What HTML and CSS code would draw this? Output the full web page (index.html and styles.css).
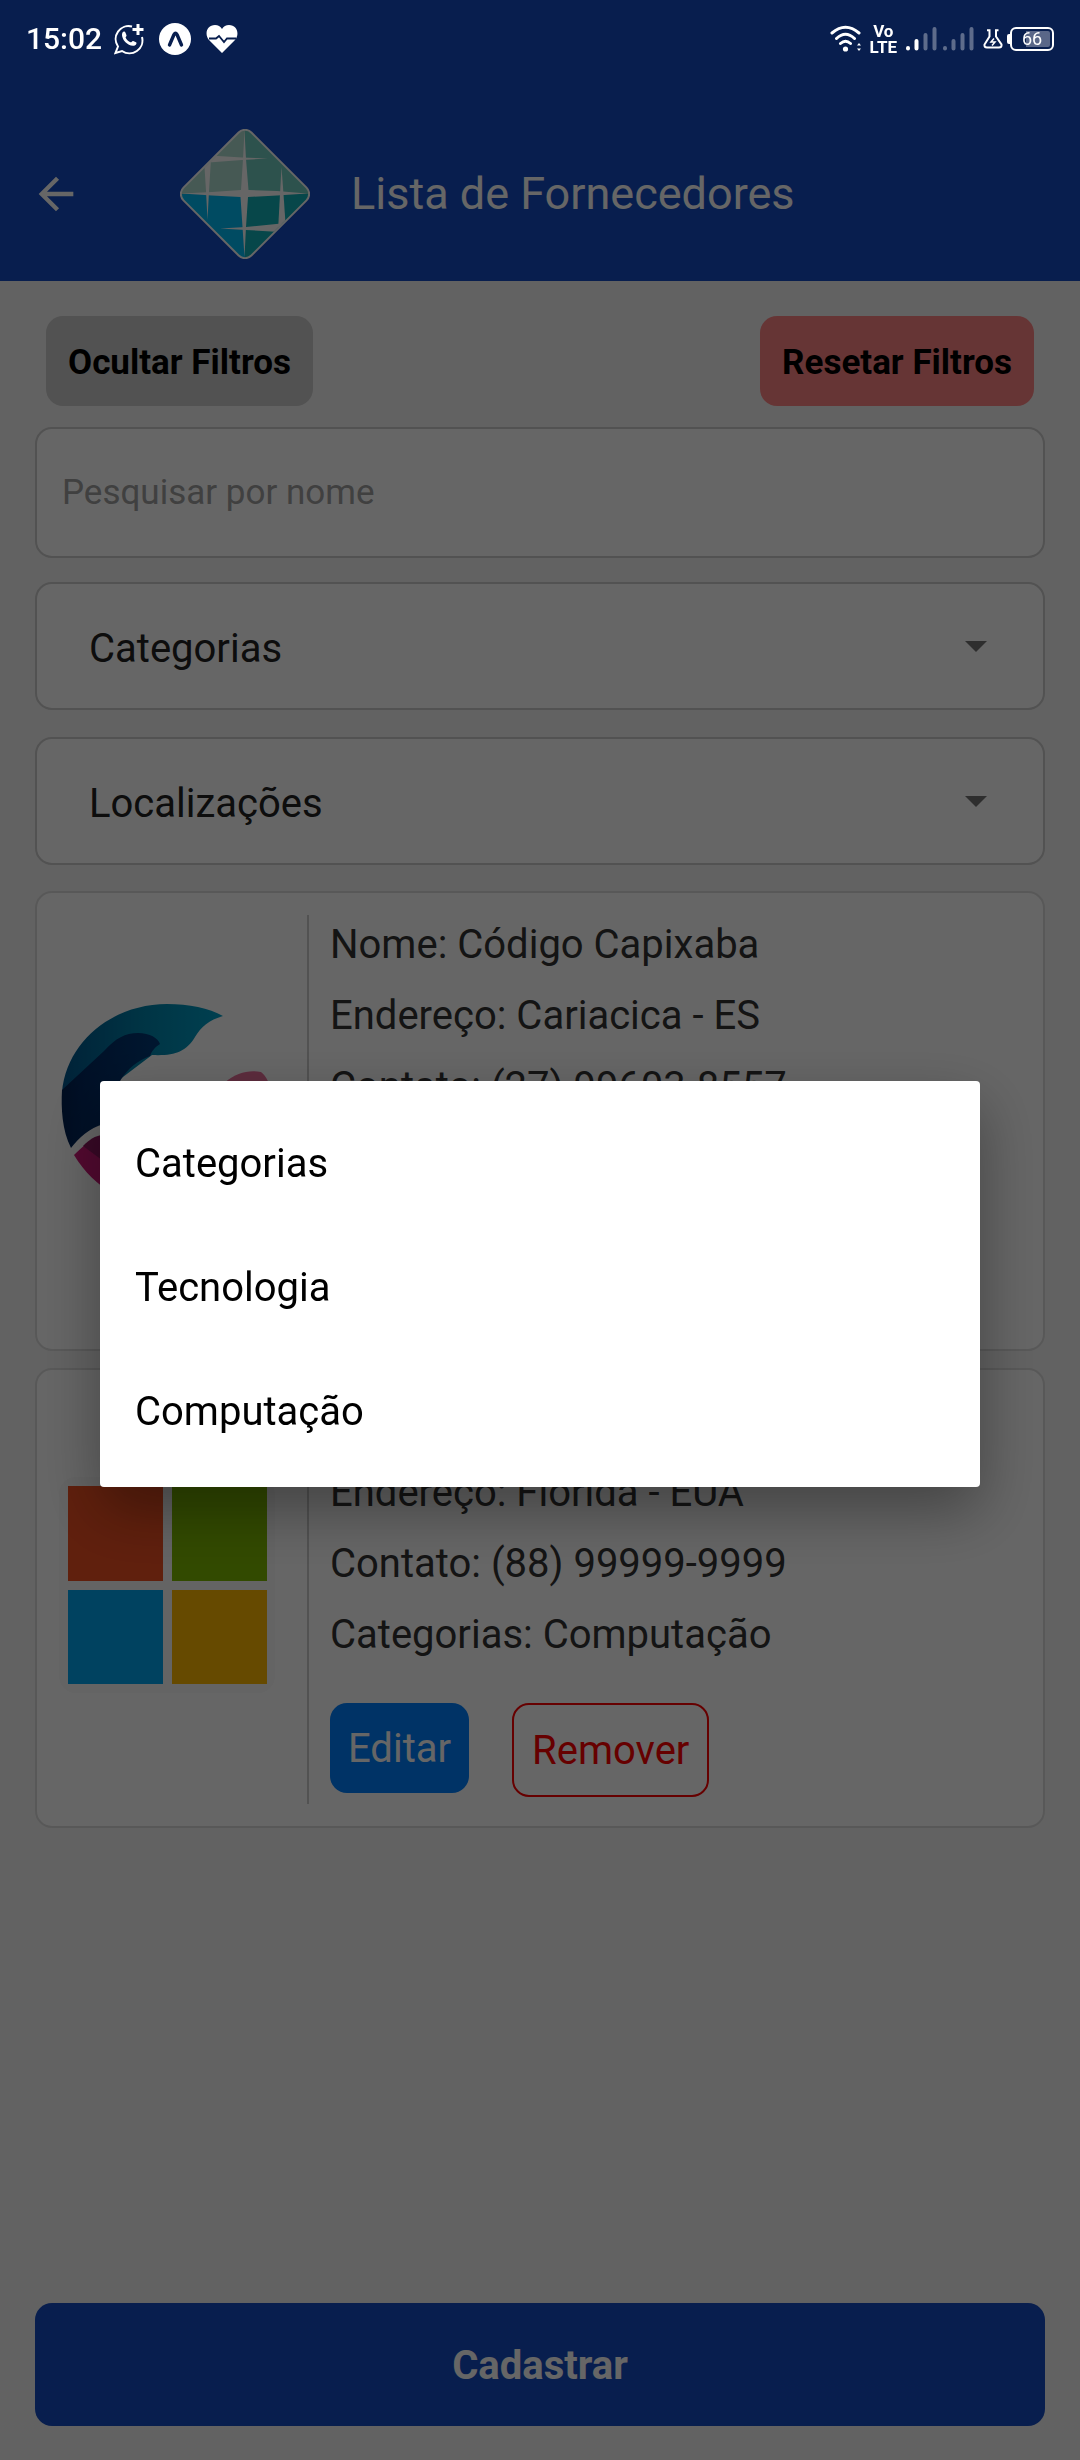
FILE: index.html
```html
<!DOCTYPE html>
<html lang="pt-BR">
<head>
<meta charset="utf-8">
<meta name="viewport" content="width=device-width, initial-scale=1">
<title>Lista de Fornecedores</title>
<link rel="stylesheet" href="styles.css">
</head>
<body>
<div class="app">
  <header class="top">
    <div class="status">
      <div class="status-group status-left">
        <span class="clock">15:02</span>
        <div class="status-group">
          <svg width="30" height="32" viewBox="0 0 30 32" fill="none" stroke="#fff" stroke-width="2">
            <path d="M18 3.500A13 13 0 0 0 4 23.500L1.500 30L8 28A13 13 0 0 0 28 14"/>
            <path d="M24 1v11M18.500 6.500h11" stroke-width="3"/>
            <path d="M8.500 9.500c1-1.500 2.500-1.300 3 .2l1 2.500c.3 1-1.300 1.800-.8 2.600c1 2 2.700 3.600 4.800 4.500c1 .4 1.600-1.700 2.700-1.300l2.800 1.300c1 .5.500 2.500-1.200 3.200c-3 1.200-7-1-9.300-3.300S7 12.500 8.500 9.500z" fill="#fff" stroke="none"/>
          </svg>
          <svg width="32" height="32" viewBox="0 0 32 32">
            <circle cx="16" cy="16" r="16" fill="#fff"/>
            <path d="M10.500 22L15 11.500Q16.500 9 18 11.500L22.500 22" fill="none" stroke="#081e4e" stroke-width="3.400" stroke-linecap="round" stroke-linejoin="round"/>
          </svg>
          <svg width="32" height="32" viewBox="0 0 32 32">
            <path d="M16 30L3 17C-2 11 1 2 9 2c3 0 5.500 1.500 7 4c1.500-2.500 4-4 7-4c8 0 11 9 6 15z" fill="#fff"/>
            <path d="M3 15.500h7l3-2.500l5 6l3-3.500h9" fill="none" stroke="#081e4e" stroke-width="1.800"/>
          </svg>
        </div>
      </div>
      <div class="status-group status-right">
        <svg width="32" height="28" viewBox="0 0 32 28" fill="none" stroke="#fff" stroke-width="3" stroke-linecap="round">
          <path d="M2 8Q15.500-3.500 29 8M6.500 13.500Q15.500 5 24.500 13.500M10.500 18.500Q15.500 14 20.500 18.500"/>
          <circle cx="15.500" cy="24" r="2.600" fill="#fff" stroke="none"/>
          <path d="M27 20.500l2-2.500l2 2.500zM27 23.500l2 2.500l2-2.500z" fill="#fff" stroke="none"/>
        </svg>
        <span class="volte"><span>Vo</span><span>LTE</span></span>
        <svg width="70" height="26" viewBox="0 0 70 26" stroke="#fff" stroke-width="4" stroke-linecap="round">
          <path d="M3 22v.5M11.500 15v7.500"/>
          <path opacity=".35" d="M20.500 9v13.500M29.500 3v19.500M40 22v.5M48.500 15v7.500M57.500 9v13.500M66.500 3v19.500"/>
        </svg>
        <div class="status-group power">
          <svg width="20" height="20" viewBox="0 0 20 20" fill="none" stroke="#fff" stroke-width="2">
            <path d="M4 1.200h3.500M12 1.200h3.500M6.500 1.500v6L1.500 15.500Q1 18.500 4 18.500H16Q19 18.500 18.500 15.500L13 7.500v-6"/>
            <path d="M11 9.500l-3 3.500h4l-3 3.500" stroke-width="1.500"/>
          </svg>
          <span class="battery"><span class="battery-tip"></span><span class="battery-body"><span>66</span></span></span>
        </div>
      </div>
    </div>
    <div class="bar">
      <button class="back" aria-label="Voltar">
        <svg width="52" height="52" viewBox="0 0 24 24" fill="#fff"><path d="M20 11H7.830l5.590-5.590L12 4l-8 8 8 8 1.410-1.410L7.830 13H20v-2z"/></svg>
      </button>
      <svg class="brand" width="130" height="130" viewBox="0 0 130 130">
        <defs><clipPath id="gem"><rect x="18" y="18" width="94" height="94" rx="8" transform="rotate(45 65 65)"/></clipPath></defs>
        <rect x="16" y="16" width="98" height="98" rx="10" transform="rotate(45 65 65)" fill="#fff"/>
        <g clip-path="url(#gem)">
          <path fill="#afded2" d="M0 0h65v65H0z"/><path fill="#70cdc0" d="M65 0h65v65H65z"/>
          <path fill="#00bcf5" d="M0 65h65v65H0z"/><path fill="#12b2b9" d="M65 65h65v65H65z"/>
          <g fill="#fff">
            <path d="M64.500 2L66 30L68.500 61L97 62L127 64.500L97 66.500L68 68L66 98L64.500 128L62.500 98L60.500 68L32 66.500L2 64.500L32 63L61 61L63 30z"/>
            <path d="M22 26L62 28.500L88 29.500L62 31L22 34z"/>
            <path d="M24 30L31 30L29 62L27.500 91L26 62z"/>
            <path d="M101.500 38L103.500 65L106 102L98 102L100 65z"/>
            <path d="M40 99.500L66 98L106 94L100 103L66 101z"/>
          </g>
        </g>
      </svg>
      <h1 class="title">Lista de Fornecedores</h1>
    </div>
  </header>

  <main class="content">
    <div class="filter-actions">
      <button class="chip">Ocultar Filtros</button>
      <button class="chip chip-reset">Resetar Filtros</button>
    </div>
    <input class="search" type="text" placeholder="Pesquisar por nome" aria-label="Pesquisar por nome">
    <div class="pickers">
      <div class="picker">
        <select aria-label="Categorias"><option>Categorias</option><option>Tecnologia</option><option>Computação</option></select>
        <svg class="caret" width="22" height="11" viewBox="0 0 22 11"><path d="M0 0h22L11 11z"/></svg>
      </div>
      <div class="picker">
        <select aria-label="Localizações"><option>Localizações</option></select>
        <svg class="caret" width="22" height="11" viewBox="0 0 22 11"><path d="M0 0h22L11 11z"/></svg>
      </div>
    </div>

    <div class="cards">
      <article class="card">
        <svg class="logo" width="216" height="216" viewBox="0 0 216 216">
          <defs>
            <linearGradient id="sea" x1="0" x2="1"><stop offset="0" stop-color="#00558c"/><stop offset=".5" stop-color="#0083ab"/><stop offset="1" stop-color="#00a0c8"/></linearGradient>
            <linearGradient id="deep" x1="0" x2="1"><stop offset="0" stop-color="#002050"/><stop offset=".2" stop-color="#002860"/><stop offset="1" stop-color="#003a78"/></linearGradient>
          </defs>
          <path fill="url(#sea)" d="M3 92C8 40 55 4 108 4C130 4 150 8 164 16C150 20 142 27 136 37C127 52 115 56 93 55L60 80L3 100z"/>
          <path fill="url(#deep)" d="M3 90L45 51C57 38 66 33 79 33C91 33 99 38 101 44C95 48 93 51 91 56C65 66 55 86 45 124C30 128 20 138 12 148C3 130 2 108 3 90z"/>
          <path fill="#cf1879" d="M15 155C25 145 33 139 43 135C60 170 130 180 190 140C165 220 60 230 15 155z"/>
          <path fill="#8e1760" d="M24 146C31 139 36 136 43 135L70 180z"/>
          <path fill="#e86f9a" d="M140 120C158 80 180 68 202 72C208 77 212 84 211 100C200 130 170 150 140 120z"/>
        </svg>
        <div class="info">
          <p>Nome: Código Capixaba</p>
          <p>Endereço: Cariacica - ES</p>
          <p>Contato: (27) 99603-8557</p>
          <p>Categorias: Tecnologia</p>
          <div class="actions"><button class="edit">Editar</button><button class="remove">Remover</button></div>
        </div>
      </article>
      <article class="card">
        <svg class="logo" width="216" height="216" viewBox="0 0 216 216">
          <rect width="216" height="216" rx="17" fill="#f9f9f9"/>
          <path fill="#f05022" d="M9 9h95v95H9z"/><path fill="#7eb900" d="M113 9h95v95h-95z"/>
          <path fill="#00a5ef" d="M9 113h95v94H9z"/><path fill="#ffb900" d="M113 113h95v94h-95z"/>
        </svg>
        <div class="info">
          <p>Nome: Microsoft</p>
          <p>Endereço: Florida - EUA</p>
          <p>Contato: (88) 99999-9999</p>
          <p>Categorias: Computação</p>
          <div class="actions"><button class="edit">Editar</button><button class="remove">Remover</button></div>
        </div>
      </article>
    </div>
    <button class="submit">Cadastrar</button>
  </main>
</div>

<div class="scrim">
  <div class="menu" role="listbox" aria-label="Categorias">
    <button class="option" role="option" aria-selected="true">Categorias</button>
    <button class="option" role="option" aria-selected="false">Tecnologia</button>
    <button class="option" role="option" aria-selected="false">Computação</button>
  </div>
</div>
</body>
</html>
```
FILE: styles.css
```css
* { box-sizing: border-box; }

body {
  margin: 0;
  background: #f5f5f5;
  font-family: Roboto, "Liberation Sans", sans-serif;
  font-size: 40px;
  color: #333;
}

button, input, select { font: inherit; color: inherit; margin: 0; border: 0; padding: 0; background: none; }
p, h1 { margin: 0; }
svg { display: block; flex: none; }

.app { min-height: 100vh; display: flex; flex-direction: column; }

/* header */
.top { background: #144bc3; }

/* the system status bar stays bright above the scrim */
.status {
  position: relative;
  z-index: 2;
  height: 78px;
  padding: 0 26px;
  display: flex;
  justify-content: space-between;
  align-items: center;
  color: #fff;
}
.status-group { display: flex; align-items: center; gap: 15px; }
.status-left { gap: 12px; }
.status-right { gap: 8px; }
.power { gap: 4px; }
.clock { font-size: 30px; font-weight: 500; line-height: 36px; }
.volte { display: flex; flex-direction: column; align-items: center; font-size: 17px; font-weight: 700; line-height: 16px; }
.battery { display: flex; align-items: center; }
.battery-tip { width: 3px; height: 10px; background: #fff; border-radius: 2px 0 0 2px; }
.battery-body {
  width: 44px;
  height: 24px;
  border: 2px solid #fff;
  border-radius: 6px;
  padding: 2px;
  display: flex;
}
.battery-body span {
  flex: 1;
  font-size: 18px;
  line-height: 16px;
  padding-left: 8px;
  border-radius: 2px;
  background: linear-gradient(90deg, transparent 34%, #5a6788 34%);
}

.bar { height: 203px; padding: 29px 30px 0; display: flex; align-items: center; }
.back { width: 52px; height: 52px; }
.brand { margin-left: 98px; }
.title { margin-left: 41px; font-size: 45px; font-weight: 400; line-height: 52px; color: #fff; }

/* content */
.content { flex: 1; padding: 35px 35px 34px; display: flex; flex-direction: column; }
.filter-actions { display: flex; justify-content: space-between; padding: 0 11px; }
.chip {
  height: 90px;
  padding: 2px 22px 0;
  border-radius: 17px;
  background: #ccc;
  color: #000;
  font-size: 35px;
  font-weight: 700;
}
.chip-reset { background: #ff8585; }

.search {
  width: 100%;
  height: 131px;
  margin-top: 21px;
  padding: 0 25px;
  border: 2px solid #ccc;
  border-radius: 17px;
  background: #fff;
  font-size: 35px;
}
.search::placeholder { color: #a0a0a0; opacity: 1; }

.pickers { margin-top: 24px; display: grid; gap: 27px; }
.picker {
  height: 128px;
  padding-right: 56px;
  display: flex;
  align-items: center;
  border: 2px solid #ccc;
  border-radius: 17px;
  background: #fff;
  color: #222;
}
.picker select { flex: 1; height: 100%; padding: 4px 0 0 52px; appearance: none; }
.caret { fill: #737373; }

.cards { margin-top: 26px; display: grid; gap: 17px; }
.card {
  padding: 22px;
  display: flex;
  align-items: center;
  border: 2px solid #ddd;
  border-radius: 17px;
  background: #fff;
}
.logo { margin: 0 32px 26px 0; }
.info {
  flex: 1;
  border-left: 2px solid #ccc;
  padding: 3px 0 7px 21px;
  display: flex;
  flex-direction: column;
  gap: 18px;
  line-height: 53px;
}
.actions { display: flex; align-items: flex-start; gap: 43px; margin-top: 24px; }
.edit { height: 90px; padding: 0 18px; border-radius: 17px; background: #0080ff; color: #fff; }
.remove { height: 94px; padding: 0 18px; border: 2px solid #f00; border-radius: 17px; color: #f00; }

.submit {
  height: 123px;
  margin-top: auto;
  padding-top: 2px;
  border-radius: 17px;
  background: #144bc3;
  color: #fff;
  font-weight: 700;
}

/* open picker menu */
.scrim {
  position: fixed;
  inset: 0;
  z-index: 1;
  padding: 108px 100px 0;
  display: grid;
  align-items: center;
  background: rgba(0, 0, 0, .6);
}
.menu {
  padding: 20px 0 14px;
  display: grid;
  border-radius: 4px;
  background: #fff;
  box-shadow: 0 24px 60px rgba(0, 0, 0, .35);
}
.option { height: 124px; padding: 0 35px; text-align: left; color: #000; }
```
